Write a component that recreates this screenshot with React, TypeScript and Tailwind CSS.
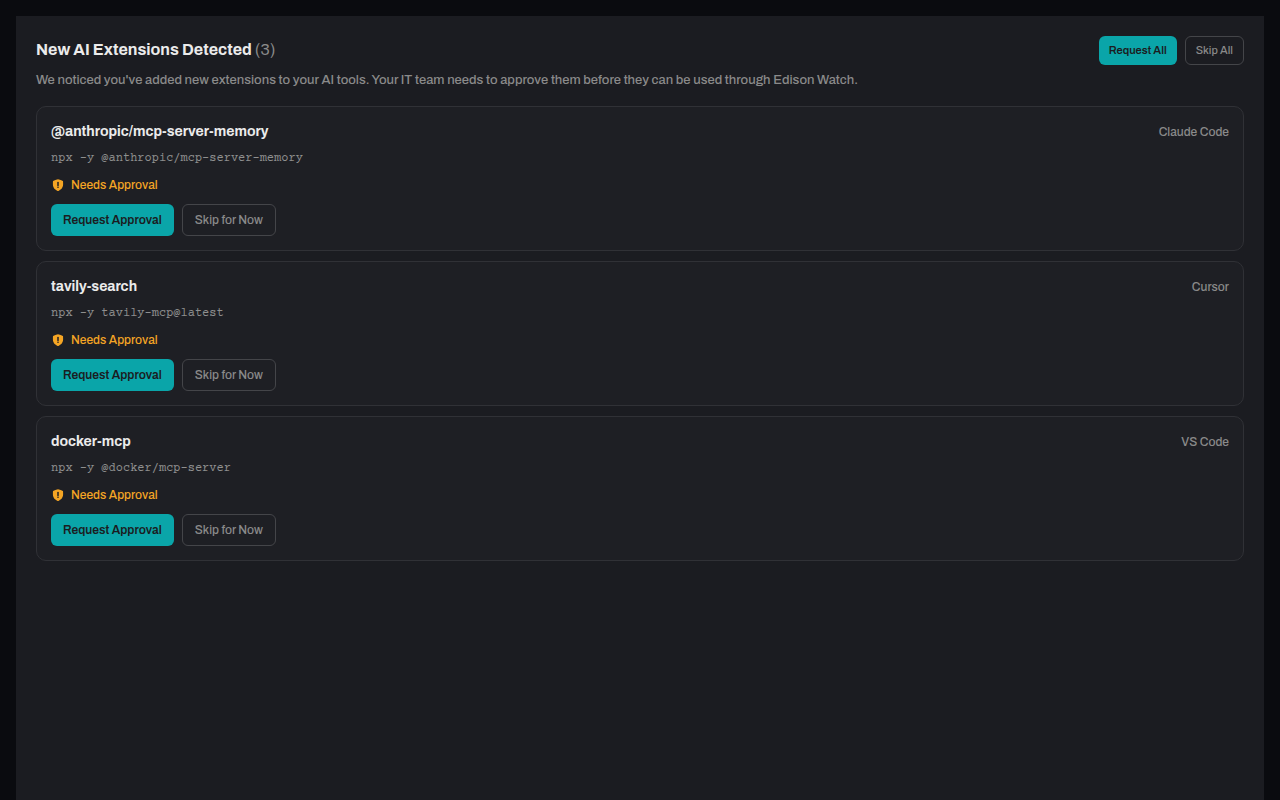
interface Extension {
    name: string;
    command: string;
    source: string;
}

const extensions: Extension[] = [
    {
        name: "@anthropic/mcp-server-memory",
        command: "npx -y @anthropic/mcp-server-memory",
        source: "Claude Code",
    },
    { name: "tavily-search", command: "npx -y tavily-mcp@latest", source: "Cursor" },
    { name: "docker-mcp", command: "npx -y @docker/mcp-server", source: "VS Code" },
];

function ShieldIcon() {
    return (
        <svg className="size-[14px] shrink-0" viewBox="0 0 14 14" fill="none" aria-hidden="true">
            <path
                d="M7 1.2c.5 0 1 .3 1.9.6l1.3.4c1 .3 1.5.5 1.7.9.2.4.2 1 .2 2.1v1.4c0 3.6-2.6 5.4-4.2 6.1-.4.2-.6.2-.9.2s-.5 0-.9-.2C4.500 12 1.900 10.200 1.900 6.600V5.200c0-1.1 0-1.7.2-2.1.2-.4.7-.6 1.7-.9l1.3-.4C6 1.5 6.5 1.200 7 1.200Z"
                fill="#f5a524"
            />
            <path d="M7 4.500v2.900" stroke="#1e1f24" strokeWidth="1.5" strokeLinecap="round" />
            <circle cx="7" cy="9.300" r=".8" fill="#1e1f24" />
        </svg>
    );
}

function ExtensionCard({ extension }: { extension: Extension }) {
    return (
        <li className="rounded-[10px] border border-[#303136] bg-[#1e1f24] p-[14px]">
            <div className="flex items-center justify-between gap-3">
                <h2 className="text-[14px] leading-[22px] font-bold text-[#ebebeb]">{extension.name}</h2>
                <span className="text-xs leading-[22px] text-[#8a8a8a]">{extension.source}</span>
            </div>
            <code className="mt-[7px] block font-['Courier_Prime','Courier','Liberation_Mono',monospace] text-xs leading-[18px] break-all text-[#8f8f8f]">
                {extension.command}
            </code>
            <div className="mt-2 flex items-center gap-1.5 text-xs leading-[18px] text-[#f5a524]">
                <ShieldIcon />
                Needs Approval
            </div>
            <div className="mt-[10px] flex gap-2">
                <button className="h-8 rounded-md bg-[#0aa5a9] px-3 text-xs font-semibold text-[#1b1c21]">
                    Request Approval
                </button>
                <button className="h-8 rounded-md border border-[#444549] px-3 text-xs text-[#8a8a8a]">
                    Skip for Now
                </button>
            </div>
        </li>
    );
}

export default function App() {
    return (
        <div className="min-h-screen bg-[#0a0b0f] px-4 pt-4 font-['Archivo','Liberation_Sans',sans-serif] font-medium antialiased">
            <main className="min-h-[calc(100vh-16px)] bg-[#1b1c21] p-5">
                <header className="flex items-start justify-between gap-3">
                    <h1 className="text-base leading-7 font-bold text-[#ebebeb]">
                        New AI Extensions Detected <span className="font-normal text-[#8a8a8a]">({extensions.length})</span>
                    </h1>
                    <div className="flex gap-2">
                        <button className="h-[29px] rounded-md bg-[#0aa5a9] px-[10px] text-[11px] font-semibold text-[#1b1c21]">
                            Request All
                        </button>
                        <button className="h-[29px] rounded-md border border-[#444549] px-[10px] text-[11px] text-[#8a8a8a]">
                            Skip All
                        </button>
                    </div>
                </header>
                <p className="mt-[5px] text-[13px] leading-5 text-[#8a8a8a]">
                    We noticed you've added new extensions to your AI tools. Your IT team needs to approve them before they
                    can be used through Edison Watch.
                </p>
                <ul className="mt-4 flex flex-col gap-[10px]">
                    {extensions.map((extension) => (
                        <ExtensionCard key={extension.name} extension={extension} />
                    ))}
                </ul>
            </main>
        </div>
    );
}
